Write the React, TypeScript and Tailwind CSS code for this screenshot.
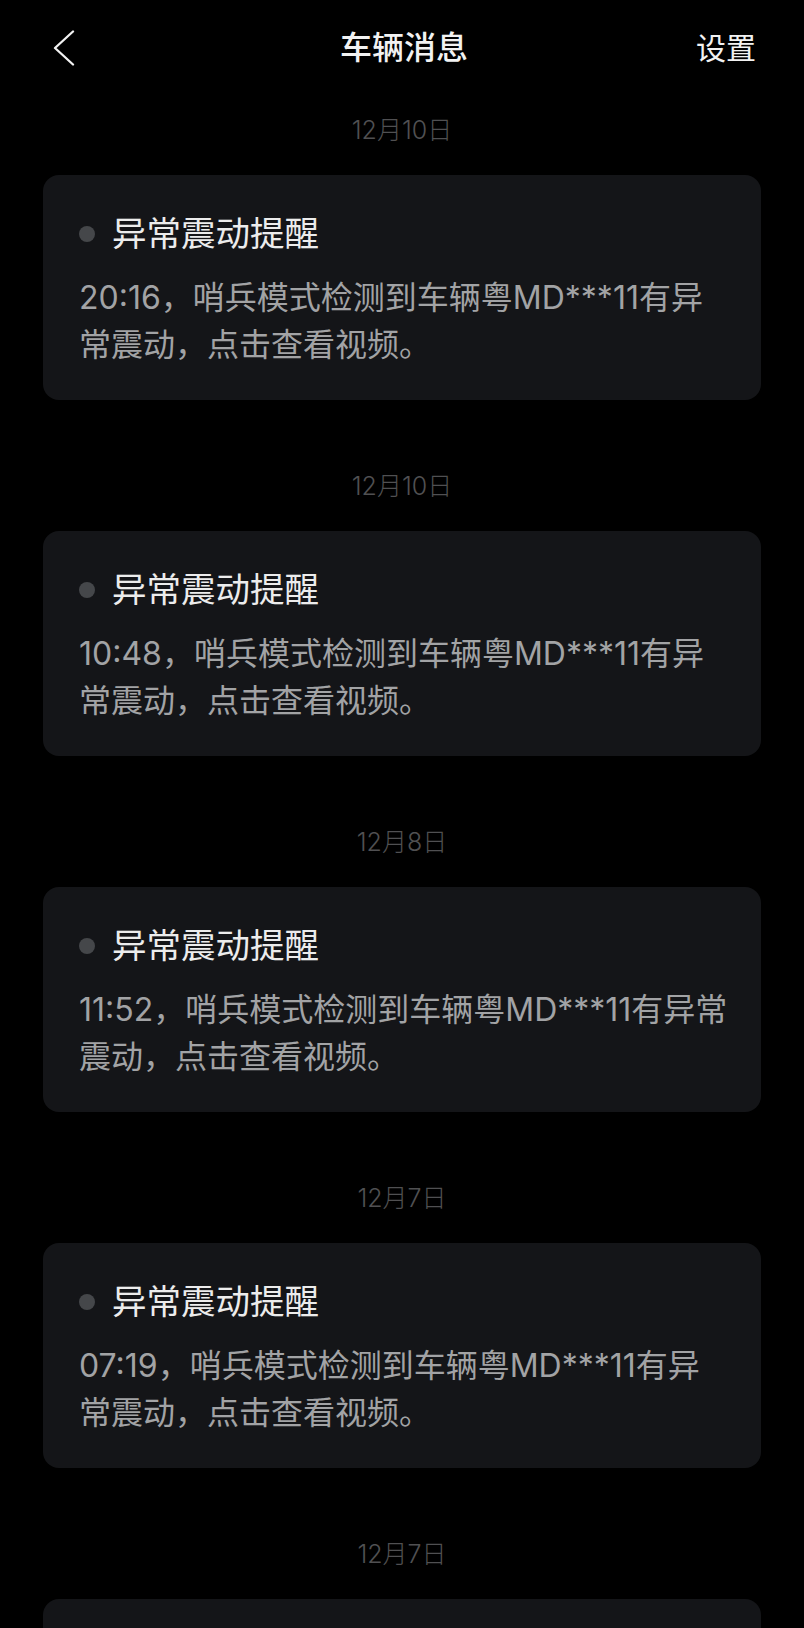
const FONT = "font-['Inter','Noto_Sans_CJK_SC',sans-serif]";

const MESSAGES = [
  { date: '12月10日', lines: ['20:16，哨兵模式检测到车辆粤MD***11有异', '常震动，点击查看视频。'] },
  { date: '12月10日', lines: ['10:48，哨兵模式检测到车辆粤MD***11有异', '常震动，点击查看视频。'] },
  { date: '12月8日', lines: ['11:52，哨兵模式检测到车辆粤MD***11有异常', '震动，点击查看视频。'] },
  { date: '12月7日', lines: ['07:19，哨兵模式检测到车辆粤MD***11有异', '常震动，点击查看视频。'] },
  { date: '12月7日', lines: ['06:02，哨兵模式检测到车辆粤MD***11有异', '常震动，点击查看视频。'] },
];

function BackIcon() {
  return (
    <svg width="24" height="36" viewBox="0 0 24 36" fill="none" aria-hidden>
      <polyline
        points="21,1.5 3,18 21,34.5"
        stroke="#f2f2f2"
        strokeWidth="2.3"
        strokeLinecap="round"
        strokeLinejoin="round"
      />
    </svg>
  );
}

function MessageCard({ lines }: { lines: string[] }) {
  return (
    <div className="rounded-[16px] bg-[#141518] px-[36px] pb-[32px] pt-[37px]">
      <div className="flex h-[44px] items-center gap-[17px]">
        <span className="h-[16px] w-[16px] shrink-0 rounded-full bg-[#45474a]" />
        <span className="text-[34.5px] leading-[44px] text-[#ececec]">异常震动提醒</span>
      </div>
      <p className="mt-[18px] whitespace-nowrap text-[32px] leading-[47px] text-[#a2a3a5]">
        {lines.map((l, i) => (
          <span key={i} className="block">
            {l}
          </span>
        ))}
      </p>
    </div>
  );
}

export default function App() {
  return (
    <div className={`h-screen w-full overflow-hidden bg-black ${FONT}`}>
      <header className="grid h-[96px] grid-cols-[1fr_auto_1fr] items-center pl-[52px] pr-[48px]">
        <button type="button" aria-label="返回" className="flex items-center justify-self-start">
          <BackIcon />
        </button>
        <h1 className="text-[32px] font-medium leading-none text-[#f2f2f2]">车辆消息</h1>
        <button type="button" className="justify-self-end text-[30px] leading-none text-[#f2f2f2]">
          设置
        </button>
      </header>

      <div className="flex flex-col gap-[70px] px-[43px] pt-[18px]">
        {MESSAGES.map((m, i) => (
          <section key={i}>
            <div className="mb-[29px] h-[32px] text-center text-[25px] font-light leading-[32px] text-[#505052]">
              {m.date}
            </div>
            <MessageCard lines={m.lines} />
          </section>
        ))}
      </div>
    </div>
  );
}
